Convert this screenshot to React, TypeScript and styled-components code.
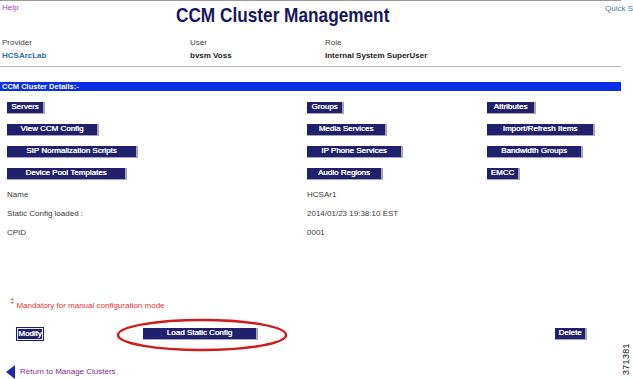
import React from "react";
import styled, { createGlobalStyle } from "styled-components";

const Global = createGlobalStyle`
  html, body { margin: 0; padding: 0; background: #fff; }
  body { font-family: "Liberation Sans", Arial, sans-serif; }
`;

const Page = styled.div`
  position: relative;
  width: 633px;
  height: 379px;
  overflow: hidden;
  background: #fff;
  display: flex;
  flex-direction: column;
`;

const TopRule = styled.div`
  width: 621px;
  height: 1px;
  background: #9a9a9a;
`;

const Header = styled.div`
  display: flex;
  align-items: flex-start;
  height: 34px;
`;

const HelpLink = styled.span`
  width: 174px;
  padding: 2px 0 0 2px;
  font-size: 8px;
  color: #a044a8;
`;

const Title = styled.h1`
  margin: 0;
  padding-top: 2px;
  width: 212px;
  font-size: 21px;
  font-weight: bold;
  color: #17175c;
  white-space: nowrap;
  transform: scaleX(0.82);
  transform-origin: left top;
`;

const QuickLink = styled.span`
  flex: 1;
  padding-top: 3px;
  font-size: 8px;
  color: #4c7aa6;
  text-align: right;
  white-space: nowrap;
  overflow: hidden;
`;

const InfoGrid = styled.div`
  display: grid;
  grid-template-columns: 188px 135px 1fr;
  row-gap: 3px;
  padding: 5px 0 0 2px;
  line-height: 10px;
`;

const InfoLabel = styled.span`
  font-size: 8px;
  color: #444;
`;

const InfoValue = styled.span<{ $link?: boolean }>`
  font-size: 8px;
  font-weight: bold;
  color: ${(p) => (p.$link ? "#2a6cae" : "#222")};
`;

const Divider = styled.div`
  width: 621px;
  height: 1px;
  background: #b8b8b8;
  margin: 5px 0 15px;
`;

const SectionBar = styled.div`
  width: 619px;
  height: 9px;
  padding-left: 2px;
  background: #0a2fe6;
  color: #fff;
  font-size: 7.5px;
  font-weight: bold;
  line-height: 9px;
`;

const ButtonGrid = styled.div`
  display: grid;
  grid-template-columns: 300px 180px 1fr;
  row-gap: 10px;
  padding: 11px 0 0 7px;
  justify-items: start;
`;

const NavButton = styled.div<{ $w: number; $focus?: boolean }>`
  box-sizing: border-box;
  width: ${(p) => p.$w}px;
  height: ${(p) => (p.$focus ? 14 : 12)}px;
  background: #20206c;
  color: #fff;
  font-size: 8px;
  line-height: ${(p) => (p.$focus ? 11 : 10)}px;
  text-align: center;
  white-space: nowrap;
  text-shadow: 0.3px 0 0 #fff;
  border-style: solid;
  border-width: ${(p) => (p.$focus ? "1px" : "0 2px 1px 0")};
  border-color: ${(p) => (p.$focus ? "#20206c" : "#a4a4bc")};
  outline: ${(p) => (p.$focus ? "1px solid #e8e8f4" : "none")};
  outline-offset: -2px;
`;

const Details = styled.div`
  display: grid;
  grid-template-columns: 300px 1fr;
  row-gap: 9px;
  padding: 10px 0 0 7px;
`;

const DetailText = styled.span`
  font-size: 8px;
  color: #3a3a3a;
  line-height: 10px;
`;

const Mandatory = styled.div`
  margin-top: 63px;
  padding-left: 10px;
  display: flex;
  align-items: flex-start;
  gap: 2px;
  font-size: 8px;
  color: #e03434;
`;

const Dagger = styled.span`
  font-size: 8px;
  margin-top: -5px;
`;

const ActionRow = styled.div`
  display: flex;
  align-items: center;
  margin-top: 17px;
  padding-left: 16px;
  height: 14px;
`;

const LoadWrap = styled.div`
  position: relative;
  margin-left: 99px;
`;

const Ellipse = styled.svg`
  position: absolute;
  left: -27px;
  top: -10px;
  pointer-events: none;
`;

const Spacer = styled.div`
  flex: 1;
`;

const DeleteSlot = styled.div`
  margin-right: 46px;
`;

const ReturnRow = styled.div`
  display: flex;
  align-items: center;
  gap: 5px;
  margin-top: 24px;
  padding-left: 6px;
  font-size: 8px;
  color: #8a2a8e;
`;

const FigureId = styled.span`
  position: absolute;
  right: 2px;
  bottom: 4px;
  transform-origin: right bottom;
  transform: rotate(-90deg) translate(100%, 0);
  font-size: 9px;
  color: #111;
  letter-spacing: 0.3px;
`;

export default function App() {
  const rows: [string, number][][] = [
    [["Servers", 38], ["Groups", 37], ["Attributes", 49]],
    [["View CCM Config", 92], ["Media Services", 80], ["Import/Refresh Items", 108]],
    [["SIP Normalization Scripts", 131], ["IP Phone Services", 96], ["Bandwidth Groups", 96]],
    [["Device Pool Templates", 120], ["Audio Regions", 76], ["EMCC", 33]],
  ];
  return (
    <Page>
      <Global />
      <TopRule />
      <Header>
        <HelpLink>Help</HelpLink>
        <Title>CCM Cluster Management</Title>
        <QuickLink>Quick S</QuickLink>
      </Header>
      <InfoGrid>
        <InfoLabel>Provider</InfoLabel>
        <InfoLabel>User</InfoLabel>
        <InfoLabel>Role</InfoLabel>
        <InfoValue $link>HCSArcLab</InfoValue>
        <InfoValue>bvsm Voss</InfoValue>
        <InfoValue>Internal System SuperUser</InfoValue>
      </InfoGrid>
      <Divider />
      <SectionBar>CCM Cluster Details:-</SectionBar>
      <ButtonGrid>
        {rows.flat().map(([label, w]) => (
          <NavButton key={label} $w={w}>
            {label}
          </NavButton>
        ))}
      </ButtonGrid>
      <Details>
        <DetailText>Name</DetailText>
        <DetailText>HCSAr1</DetailText>
        <DetailText>Static Config loaded :</DetailText>
        <DetailText>2014/01/23 19:38:10 EST</DetailText>
        <DetailText>CPID</DetailText>
        <DetailText>0001</DetailText>
      </Details>
      <Mandatory>
        <Dagger>‡</Dagger>
        <span>Mandatory for manual configuration mode</span>
      </Mandatory>
      <ActionRow>
        <NavButton $w={28} $focus>
          Modify
        </NavButton>
        <LoadWrap>
          <NavButton $w={115}>Load Static Config</NavButton>
          <Ellipse width="172" height="34" viewBox="0 0 172 34">
            <ellipse cx="86" cy="17" rx="84" ry="15" fill="none" stroke="#d01c1c" strokeWidth="2.5" />
          </Ellipse>
        </LoadWrap>
        <Spacer />
        <DeleteSlot>
          <NavButton $w={32}>Delete</NavButton>
        </DeleteSlot>
      </ActionRow>
      <ReturnRow>
        <svg width="9" height="14" viewBox="0 0 9 14">
          <polygon points="9,0 9,14 0,7" fill="#1b2a9c" />
        </svg>
        <span>Return to Manage Clusters</span>
      </ReturnRow>
      <FigureId>371381</FigureId>
    </Page>
  );
}
